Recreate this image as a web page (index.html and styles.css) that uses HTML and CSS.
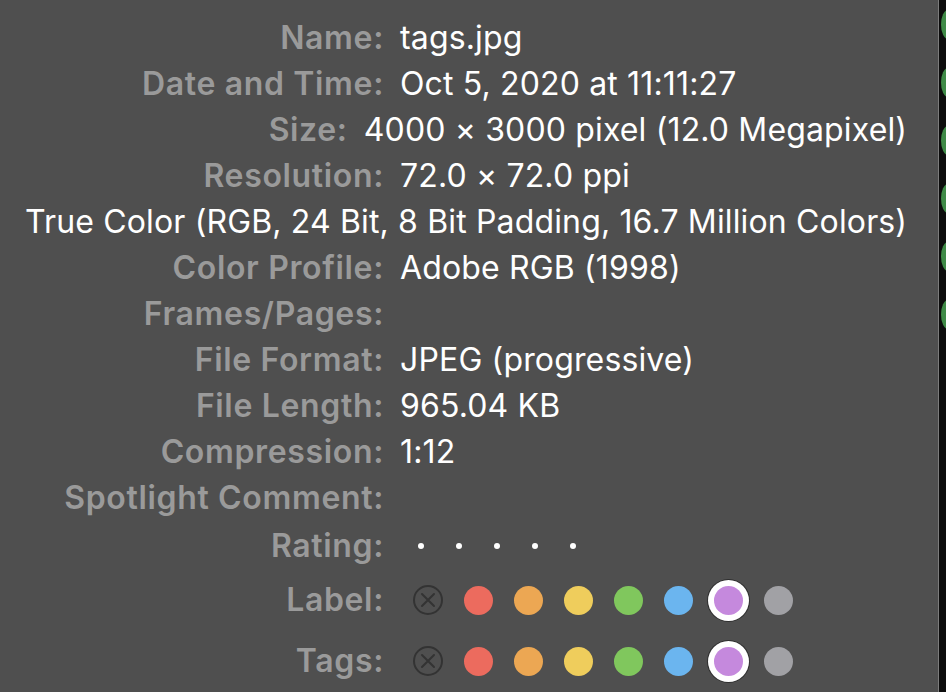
FILE: index.html
```html
<!DOCTYPE html>
<html lang="en">
<head>
    <meta charset="UTF-8">
    <title>tags.jpg - Info</title>
    <link rel="stylesheet" href="styles.css">
</head>
<body>
    <div class="window">
        <div class="info">
            <div class="row">
                <span class="label">Name:</span>
                <span class="value">tags.jpg</span>
            </div>
            <div class="row">
                <span class="label">Date and Time:</span>
                <span class="value">Oct 5, 2020 at 11:11:27</span>
            </div>
            <div class="row">
                <span class="label">Size:</span>
                <span class="value">4000 × 3000 pixel (12.0 Megapixel)</span>
            </div>
            <div class="row">
                <span class="label">Resolution:</span>
                <span class="value">72.0 × 72.0 ppi</span>
            </div>
            <div class="row row-full">
                <span class="value">True Color (RGB, 24 Bit, 8 Bit Padding, 16.7 Million Colors)</span>
            </div>
            <div class="row">
                <span class="label">Color Profile:</span>
                <span class="value">Adobe RGB (1998)</span>
            </div>
            <div class="row">
                <span class="label">Frames/Pages:</span>
                <span class="value"></span>
            </div>
            <div class="row">
                <span class="label">File Format:</span>
                <span class="value">JPEG (progressive)</span>
            </div>
            <div class="row">
                <span class="label">File Length:</span>
                <span class="value">965.04 KB</span>
            </div>
            <div class="row">
                <span class="label">Compression:</span>
                <span class="value">1:12</span>
            </div>
            <div class="row">
                <span class="label">Spotlight Comment:</span>
                <span class="value"></span>
            </div>

            <div class="row row-rating">
                <span class="label">Rating:</span>
                <div class="value stars">
                    <span class="star"></span>
                    <span class="star"></span>
                    <span class="star"></span>
                    <span class="star"></span>
                    <span class="star"></span>
                </div>
            </div>

            <div class="row row-colors row-label">
                <span class="label">Label:</span>
                <div class="value swatches">
                    <span class="swatch none">
                        <svg viewBox="0 0 30 30" width="30" height="30"><circle cx="15" cy="15" r="14" fill="none" stroke="#333" stroke-width="2"/><path d="M9 9 L21 21 M21 9 L9 21" stroke="#333" stroke-width="2" stroke-linecap="round"/></svg>
                    </span>
                    <span class="swatch red"></span>
                    <span class="swatch orange"></span>
                    <span class="swatch yellow"></span>
                    <span class="swatch green"></span>
                    <span class="swatch blue"></span>
                    <span class="swatch purple selected"></span>
                    <span class="swatch gray"></span>
                </div>
            </div>

            <div class="row row-colors row-tags">
                <span class="label">Tags:</span>
                <div class="value swatches">
                    <span class="swatch none">
                        <svg viewBox="0 0 30 30" width="30" height="30"><circle cx="15" cy="15" r="14" fill="none" stroke="#333" stroke-width="2"/><path d="M9 9 L21 21 M21 9 L9 21" stroke="#333" stroke-width="2" stroke-linecap="round"/></svg>
                    </span>
                    <span class="swatch red"></span>
                    <span class="swatch orange"></span>
                    <span class="swatch yellow"></span>
                    <span class="swatch green"></span>
                    <span class="swatch blue"></span>
                    <span class="swatch purple selected"></span>
                    <span class="swatch gray"></span>
                </div>
            </div>
        </div>

        <div class="edge">
            <span class="bump"></span>
            <span class="bump"></span>
            <span class="bump"></span>
            <span class="bump"></span>
            <span class="bump"></span>
            <span class="bump"></span>
        </div>
    </div>
</body>
</html>
```

FILE: styles.css
```css
:root {
    --bg-color: #4f4f4f;
    --label-color: #9a9a9a;
    --value-color: #ffffff;
    --row-height: 46px;
}

* {
    margin: 0;
    padding: 0;
    box-sizing: border-box;
}

html, body {
    height: 100%;
}

body {
    font-family: Inter, 'Noto Sans', 'Liberation Sans', sans-serif;
    background-color: var(--bg-color);
    color: var(--value-color);
    overflow: hidden;
}

.window {
    display: flex;
    height: 100%;
}

.info {
    flex: 1;
    padding: 15px 31px 0 25px;
}

.row {
    display: flex;
    align-items: center;
    height: var(--row-height);
    font-size: 32px;
    line-height: var(--row-height);
    white-space: nowrap;
}

.label {
    flex: 0 1 359px;
    text-align: right;
    font-weight: 600;
    color: var(--label-color);
    letter-spacing: 0.65px;
}

.value {
    margin-left: 16px;
    font-weight: 400;
    letter-spacing: 0.15px;
}

.row-full {
    justify-content: flex-end;
}

.row-full .value {
    margin-left: 0;
}

/* rating */
.row-rating {
    margin-top: 2px;
}

.stars {
    display: flex;
    gap: 32px;
    padding-left: 18px;
}

.star {
    width: 6px;
    height: 6px;
    border-radius: 50%;
    background: #fff;
}

/* colour labels */
.row-label {
    margin-top: 8px;
}

.row-tags {
    margin-top: 15px;
}

.swatches {
    display: flex;
    align-items: center;
    gap: 21px;
    padding-left: 13px;
}

.swatch {
    width: 29px;
    height: 29px;
    border-radius: 50%;
}

.swatch.none {
    width: 30px;
    height: 30px;
}

.swatch.none svg {
    display: block;
}

.red { background: #ec6b5e; }
.orange { background: #eca753; }
.yellow { background: #efcd5c; }
.green { background: #80c75d; }
.blue { background: #6bb5ef; }
.purple { background: #c589dd; }
.gray { background: #a1a1a5; }

.selected {
    box-shadow: 0 0 0 6px #fff, 0 0 0 7px #2f2f2f;
}

/* edge of the neighbouring window */
.edge {
    width: 8px;
    flex-shrink: 0;
    border-left: 1px solid #7c7c7c;
    background: #0d0d0d;
    display: flex;
    flex-direction: column;
    gap: 29px;
    padding-top: 10px;
    overflow: hidden;
}

.bump {
    display: block;
    width: 14px;
    height: 29px;
    margin-left: 2px;
    border-radius: 50%;
    background: #3f8a47;
}
```
